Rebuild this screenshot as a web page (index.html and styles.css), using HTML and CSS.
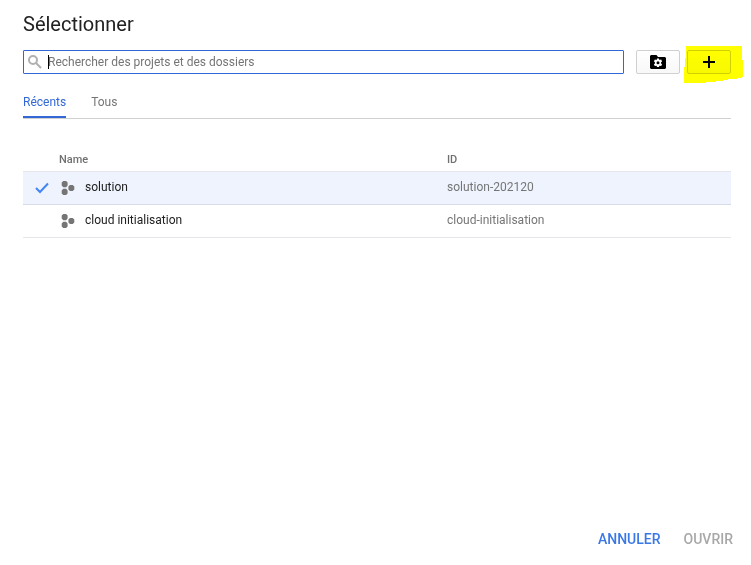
FILE: index.html
```html
<!DOCTYPE html>
<html lang="fr">
<head>
<meta charset="utf-8">
<title>Sélectionner</title>
<link rel="stylesheet" href="styles.css">
</head>
<body>
<svg class="defs" aria-hidden="true">
  <symbol id="project" viewBox="0 0 14 14">
    <path d="M2.300 0h2.800l1.500 1.500v3L5.100 6.200H2.300L.7 4.500v-3zM2.300 7.800h2.800l1.500 1.600v3L5.100 14H2.300L.7 12.400v-3zM9 4h2.700l1.600 1.600v2.800L11.700 10H9L7.400 8.400V5.600z"/>
  </symbol>
</svg>
<main class="dialog">
  <h1 class="title">Sélectionner</h1>
  <div class="toolbar">
    <div class="search">
      <svg class="search-icon" viewBox="0 0 14 14" aria-hidden="true"><circle cx="5" cy="5" r="4"/><path d="M8 8l5 5"/></svg>
      <span class="caret"></span>
      <input class="search-input" type="text" aria-label="Rechercher" placeholder="Rechercher des projets et des dossiers">
    </div>
    <div class="actions">
      <button class="tool" type="button" aria-label="Gérer les dossiers">
        <svg class="folder-icon" viewBox="0 0 16 14" aria-hidden="true">
          <path d="M1 0h5.500L8 2h7l1 1v10l-1 1H1l-1-1V1z"/>
          <path class="gear" fill-rule="evenodd" d="M7 3.500h2l.4 1.400 1.700-.4 1 1.700-1.100 1.200v.8l1.100 1.200-1 1.700-1.700-.4L9 12.100H7l-.4-1.400-1.700.4-1-1.700L5 8.200v-.8L3.900 6.200l1-1.700 1.700.4zM8 6.300a1.500 1.500 0 1 0 0 3A1.500 1.500 0 1 0 8 6.300z"/>
        </svg>
      </button>
      <div class="marked">
        <button class="tool" type="button" aria-label="Nouveau projet">
          <svg class="plus-icon" viewBox="0 0 12 12" aria-hidden="true"><path d="M5 0h2v5h5v2H7v5H5V7H0V5h5z"/></svg>
        </button>
        <svg class="highlight" viewBox="0 0 59 37" aria-hidden="true"><path d="M2 0h56v14h1v17h-1v1h-5v1h-9v1h-5v1h-7v1H22v1H0V21h1V12h1z"/></svg>
      </div>
    </div>
  </div>
  <nav class="tabs">
    <a class="tab active" href="#recents">Récents</a>
    <a class="tab" href="#tous">Tous</a>
  </nav>
  <table class="projects">
    <thead>
      <tr><th class="check"></th><th class="name">Name</th><th>ID</th></tr>
    </thead>
    <tbody>
      <tr class="selected">
        <td class="check"><svg class="check-icon" viewBox="0 0 14 12" aria-hidden="true"><path d="M1 6l4 4 8-8.500"/></svg></td>
        <td class="name"><span class="project"><svg class="project-icon" aria-hidden="true"><use href="#project"/></svg>solution</span></td>
        <td>solution-202120</td>
      </tr>
      <tr>
        <td class="check"></td>
        <td class="name"><span class="project"><svg class="project-icon" aria-hidden="true"><use href="#project"/></svg>cloud initialisation</span></td>
        <td>cloud-initialisation</td>
      </tr>
    </tbody>
  </table>
  <footer class="footer">
    <button class="text-button primary" type="button">ANNULER</button>
    <button class="text-button" type="button" disabled>OUVRIR</button>
  </footer>
</main>
</body>
</html>
```
FILE: styles.css
```css
* { box-sizing: border-box; }

body {
  margin: 0;
  background: #fff;
  color: #212121;
  font: 12px/16px Roboto, "Liberation Sans", sans-serif;
}

svg { display: block; flex: none; }
.defs { position: absolute; width: 0; height: 0; }

.dialog {
  display: flex;
  flex-direction: column;
  min-height: 100vh;
  padding: 12px 20px 16px 23px;
}

.title { margin: 0 0 14px; font-size: 20px; font-weight: 400; line-height: 24px; }

.toolbar { display: flex; gap: 12px; }

.search {
  display: flex;
  flex: 1;
  align-items: center;
  height: 24px;
  padding-left: 4px;
  border: 1px solid #3367d6;
  border-radius: 1px;
}
.search-icon { width: 14px; height: 14px; fill: none; stroke: #b0b0b0; stroke-width: 2; }
.caret { width: 1px; height: 14px; margin: 0 -1px 0 6px; background: #000; }
.search-input {
  flex: 1;
  min-width: 0;
  padding: 0;
  border: 0;
  outline: 0;
  background: none;
  color: #212121;
  font: inherit;
}
.search-input::placeholder { color: #757575; opacity: 1; }

.actions { display: flex; gap: 7px; }
.tool {
  display: flex;
  align-items: center;
  justify-content: center;
  width: 44px;
  height: 24px;
  padding: 0;
  border: 1px solid #d0d0d0;
  border-radius: 2px;
  background: linear-gradient(#fff, #f8f8f8);
  color: #000;
}
.folder-icon { width: 16px; height: 14px; }
.gear { fill: #fff; }
.plus-icon { width: 12px; height: 12px; }

.marked { position: relative; }
.highlight {
  position: absolute;
  top: -4px;
  left: -3px;
  width: 59px;
  height: 37px;
  fill: #ff0;
  mix-blend-mode: multiply;
  pointer-events: none;
}

.tabs { display: flex; gap: 25px; margin-top: 16px; border-bottom: 1px solid #d0d0d0; }
.tab {
  height: 28px;
  padding-top: 4px;
  color: #757575;
  text-decoration: none;
}
.tab.active { border-bottom: 2px solid #3367d6; color: #3367d6; }

.projects {
  width: 100%;
  margin-top: 28px;
  border-collapse: collapse;
  table-layout: fixed;
}
.projects th {
  height: 24px;
  padding: 2px 0 0;
  color: #707070;
  font-size: 11px;
  font-weight: 500;
  text-align: left;
}
.projects td {
  height: 33px;
  padding: 0 0 2px;
  border-top: 1px solid #e4e6ea;
  border-bottom: 1px solid #e4e6ea;
  color: #757575;
}
.projects .check { width: 36px; padding-left: 12px; }
.projects .name { width: 388px; }
.projects td.name { color: #212121; }
.projects .selected td { border-bottom-color: #d5dbe8; background: #eef3fd; }
.check-icon { width: 14px; height: 12px; margin-top: 2px; fill: none; stroke: #4285f4; stroke-width: 2; }
.project { display: flex; align-items: center; gap: 10px; padding-left: 2px; }
.project-icon { width: 14px; height: 14px; margin-top: 2px; fill: #757575; }

.footer { display: flex; justify-content: flex-end; gap: 23px; margin-top: auto; margin-right: -2px; }
.text-button {
  padding: 0;
  border: 0;
  background: none;
  color: #a8a8a8;
  font: 500 14px/20px Roboto, "Liberation Sans", sans-serif;
}
.text-button.primary { color: #3b78e7; }
```
